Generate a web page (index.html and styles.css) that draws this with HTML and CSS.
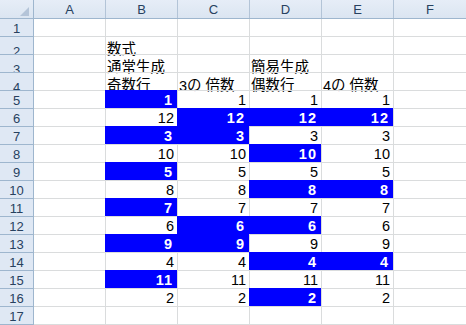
FILE: index.html
```html
<!DOCTYPE html>
<html lang="ja">
<head>
<meta charset="utf-8">
<title>Sheet</title>
<link rel="stylesheet" href="styles.css">
</head>
<body>
<div class="sheet">
  <div class="hdr">
    <div class="corner"><svg class="tri" width="9" height="9" viewBox="0 0 9 9"><polygon points="9,0 9,9 0,9" fill="#b4c4d8"/></svg></div>
    <div class="ch">A</div><div class="ch">B</div><div class="ch">C</div><div class="ch">D</div><div class="ch">E</div><div class="ch">F</div>
  </div>
  <div class="row first"><div class="rh">1</div><div class="c"></div><div class="c"></div><div class="c"></div><div class="c"></div><div class="c"></div><div class="c"></div></div>
  <div class="row"><div class="rh">2</div><div class="c"></div><div class="c t">数式</div><div class="c"></div><div class="c"></div><div class="c"></div><div class="c"></div></div>
  <div class="row"><div class="rh">3</div><div class="c"></div><div class="c t">通常生成</div><div class="c"></div><div class="c t">簡易生成</div><div class="c"></div><div class="c"></div></div>
  <div class="row"><div class="rh">4</div><div class="c"></div><div class="c t">奇数行</div><div class="c t">3<span class="no">の</span>倍数</div><div class="c t">偶数行</div><div class="c t">4<span class="no">の</span>倍数</div><div class="c"></div></div>
  <div class="row"><div class="rh">5</div><div class="c"></div><div class="c n on">1</div><div class="c n">1</div><div class="c n">1</div><div class="c n">1</div><div class="c"></div></div>
  <div class="row"><div class="rh">6</div><div class="c"></div><div class="c n">12</div><div class="c n on">12</div><div class="c n on">12</div><div class="c n on">12</div><div class="c"></div></div>
  <div class="row"><div class="rh">7</div><div class="c"></div><div class="c n on">3</div><div class="c n on">3</div><div class="c n">3</div><div class="c n">3</div><div class="c"></div></div>
  <div class="row"><div class="rh">8</div><div class="c"></div><div class="c n">10</div><div class="c n">10</div><div class="c n on">10</div><div class="c n">10</div><div class="c"></div></div>
  <div class="row"><div class="rh">9</div><div class="c"></div><div class="c n on">5</div><div class="c n">5</div><div class="c n">5</div><div class="c n">5</div><div class="c"></div></div>
  <div class="row"><div class="rh">10</div><div class="c"></div><div class="c n">8</div><div class="c n">8</div><div class="c n on">8</div><div class="c n on">8</div><div class="c"></div></div>
  <div class="row"><div class="rh">11</div><div class="c"></div><div class="c n on">7</div><div class="c n">7</div><div class="c n">7</div><div class="c n">7</div><div class="c"></div></div>
  <div class="row"><div class="rh">12</div><div class="c"></div><div class="c n">6</div><div class="c n on">6</div><div class="c n on">6</div><div class="c n">6</div><div class="c"></div></div>
  <div class="row"><div class="rh">13</div><div class="c"></div><div class="c n on">9</div><div class="c n on">9</div><div class="c n">9</div><div class="c n">9</div><div class="c"></div></div>
  <div class="row"><div class="rh">14</div><div class="c"></div><div class="c n">4</div><div class="c n">4</div><div class="c n on">4</div><div class="c n on">4</div><div class="c"></div></div>
  <div class="row"><div class="rh">15</div><div class="c"></div><div class="c n on">11</div><div class="c n">11</div><div class="c n">11</div><div class="c n">11</div><div class="c"></div></div>
  <div class="row"><div class="rh">16</div><div class="c"></div><div class="c n">2</div><div class="c n">2</div><div class="c n on">2</div><div class="c n">2</div><div class="c"></div></div>
  <div class="row"><div class="rh">17</div><div class="c"></div><div class="c"></div><div class="c"></div><div class="c"></div><div class="c"></div><div class="c"></div></div>
  <div class="row edge"><div class="rh"></div><div class="c"></div><div class="c"></div><div class="c"></div><div class="c"></div><div class="c"></div><div class="c"></div></div>
</div>
</body>
</html>
```

FILE: styles.css
```css
html, body {
  margin: 0;
  padding: 0;
  overflow: hidden;
  background: #ffffff;
}

.sheet {
  width: 466px;
  font-family: "Liberation Sans", "Noto Sans CJK JP", sans-serif;
  font-size: 14.5px;
  color: #000000;
}

.hdr,
.row {
  display: grid;
  grid-template-columns: 34px 71px 72px 72px 72px 72px 73px;
}

.hdr {
  height: 19px;
  box-sizing: border-box;
  border-bottom: 1px solid #9eb6ce;
  background: linear-gradient(#e6edf7, #dbe5f1);
}

.corner {
  box-sizing: border-box;
  border-right: 1px solid #9eb6ce;
  display: flex;
  justify-content: flex-end;
  align-items: flex-end;
  padding: 0 4px 2px 0;
}

.tri {
  display: block;
}

.ch {
  box-sizing: border-box;
  display: flex;
  justify-content: center;
  align-items: flex-end;
  padding-bottom: 1px;
  font-size: 13px;
  line-height: normal;
  color: #27415f;
}

.ch + .ch {
  border-left: 1px solid #b3c4d7;
}

.row {
  height: 18px;
}

.row.first {
  height: 17px;
}

.row.edge {
  height: 1px;
}

.rh {
  box-sizing: border-box;
  border-right: 1px solid #9eb6ce;
  border-top: 1px solid #9eb6ce;
  background: #dfe8f4;
  display: flex;
  justify-content: center;
  align-items: flex-end;
  font-size: 13px;
  line-height: normal;
  color: #27415f;
}

.first .rh {
  border-top: 0;
}

.c {
  box-sizing: border-box;
  border-top: 1px solid #dadcdd;
  border-left: 1px solid #dadcdd;
  display: flex;
  align-items: flex-end;
  line-height: normal;
  padding-left: 1px;
  white-space: nowrap;
}

.rh + .c {
  border-left: 0;
}

.first .c {
  border-top: 0;
}

.t {
  padding-bottom: 1px;
}

.n {
  justify-content: flex-end;
  padding-right: 3px;
}

.on {
  background: #0000ff;
  border-color: #0000ff;
  color: #ffffff;
  font-weight: bold;
  letter-spacing: 1px;
  padding-right: 4px;
}

.no {
  margin-right: 4px;
}
```
